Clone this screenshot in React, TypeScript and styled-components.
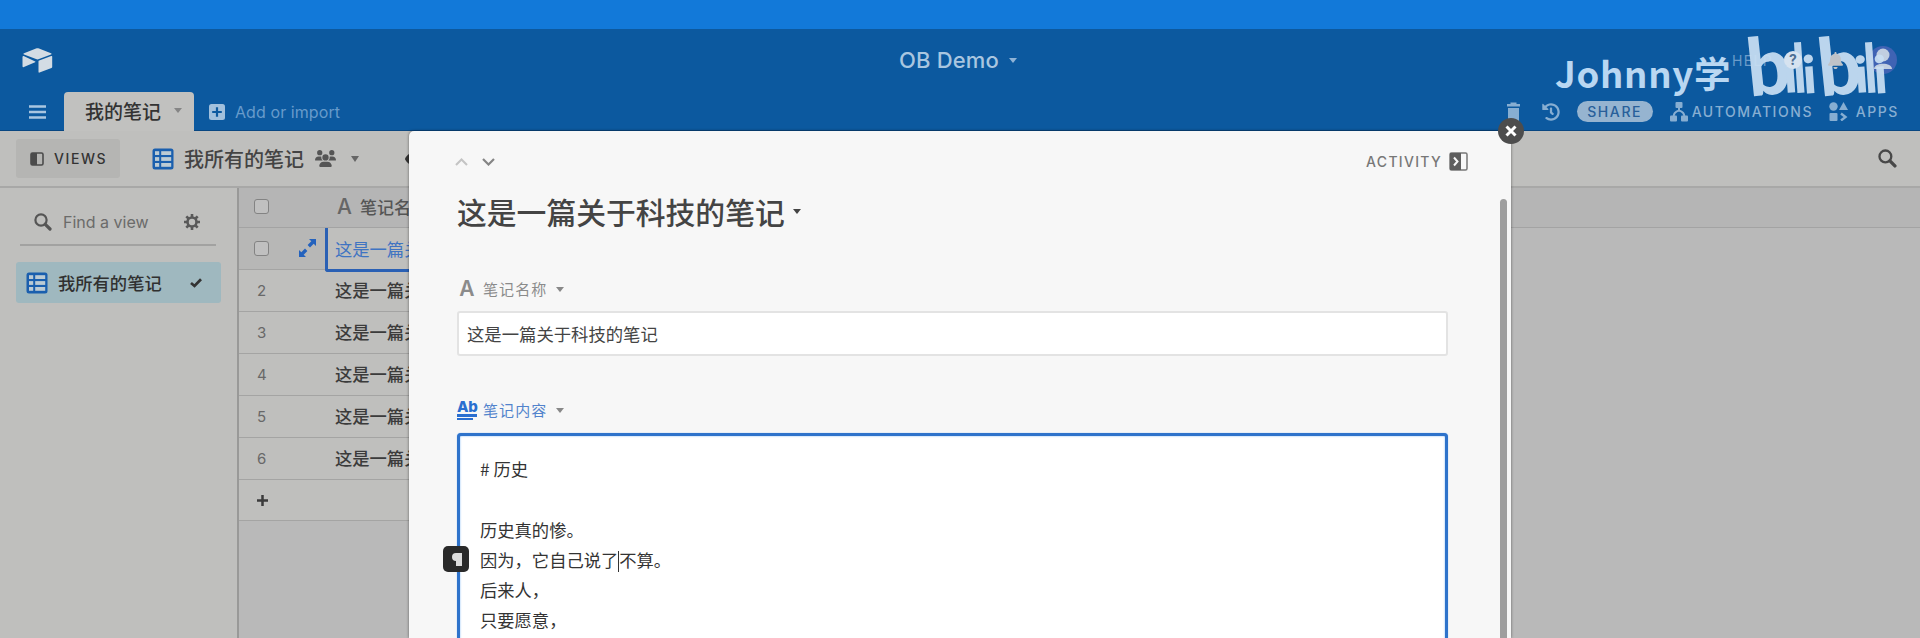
import React from 'react';
import styled, { createGlobalStyle } from 'styled-components';
import { FaEye, FaBell, FaHistory } from 'react-icons/fa';
import { FaUsers } from 'react-icons/fa6';

const sans = `Inter, "Noto Sans CJK SC", sans-serif`;

const GlobalStyle = createGlobalStyle`
  * { box-sizing: border-box; }
  body { margin: 0; font-family: ${sans}; color: #333; }
  svg { display: block; flex: none; }
`;

const Page = styled.div`
  position: relative;
  display: flex;
  flex-direction: column;
  width: 1920px;
  height: 638px;
  overflow: hidden;
  background: #bfbfbd;
`;

const TopStrip = styled.div`
  height: 29px;
  flex: none;
  background: #1279d9;
`;

const Header = styled.header`
  height: 102px;
  flex: none;
  display: flex;
  flex-direction: column;
  background: #0c599f;
  border-bottom: 1px solid #084681;
`;

const TitleRow = styled.div`
  height: 62px;
  display: grid;
  grid-template-columns: 1fr auto 1fr;
  align-items: center;
  padding: 0 23px 0 22px;
`;

const BaseName = styled.div`
  display: flex;
  align-items: center;
  gap: 10px;
  margin-right: 3px;
  font-size: 22px;
  font-weight: 500;
  letter-spacing: 0.2px;
  color: #a9c6e0;
`;

const HeaderTools = styled.div`
  display: flex;
  justify-content: flex-end;
  align-items: center;
  font-size: 14px;
  letter-spacing: 1.3px;
  color: #6b9cca;
`;

const HelpDot = styled.span`
  position: relative;
  z-index: 2;
  width: 18px;
  height: 18px;
  margin-left: 11px;
  border-radius: 50%;
  background: #d6e3f0;
  color: #4d6f94;
  font: 700 14px/18px ${sans};
  letter-spacing: 0;
  text-align: center;
`;

const Bell = styled(FaBell)`
  position: relative;
  z-index: 2;
  margin-left: 25px;
  color: #bfc3c8;
`;

const Avatar = styled.span`
  display: flex;
  align-items: center;
  justify-content: center;
  width: 28px;
  height: 28px;
  margin: 0 0 0 25px;
  border-radius: 50%;
  background: #3f63b4;
`;

const TabsRow = styled.div`
  height: 39px;
  display: flex;
  align-items: stretch;
  padding: 0 21px 0 29px;
`;

const Menu = styled.div`
  width: 35px;
  padding-top: 14px;
`;

const Tab = styled.div`
  width: 130px;
  height: 39px;
  display: flex;
  align-items: center;
  gap: 13px;
  padding: 0 0 2px 21px;
  margin-top: 1px;
  border-radius: 4px 4px 0 0;
  background: #c1c1bf;
  font: 500 19px/28px "Noto Sans CJK SC", sans-serif;
  color: #333;
`;

const AddTable = styled.div`
  display: flex;
  align-items: center;
  gap: 10px;
  margin-left: 15px;
  padding-top: 2px;
  font-size: 16px;
  letter-spacing: 0.08px;
  color: #679bcb;
`;

const TabActions = styled.div`
  display: flex;
  align-items: center;
  margin-left: auto;
  padding-top: 2px;
  color: #87aed2;
  font-size: 14px;
  font-weight: 500;
  letter-spacing: 1.6px;
`;

const Share = styled.span`
  width: 76px;
  height: 21px;
  margin: 0 17px 0 17px;
  border-radius: 11px;
  background: #96b4d0;
  color: #285f9a;
  line-height: 21px;
  text-align: center;
`;

const AppsLabel = styled.span`
  margin-left: 8px;
`;

const Automations = styled.span`
  width: 137px;
  margin-left: 4px;
  letter-spacing: 1.55px;
`;

const ViewBar = styled.div`
  height: 57px;
  flex: none;
  display: flex;
  align-items: center;
  padding: 0 23px 0 16px;
  border-bottom: 2px solid #a8a8a7;
`;

const ViewsButton = styled.div`
  display: flex;
  align-items: center;
  gap: 10px;
  width: 104px;
  height: 39px;
  padding-left: 14px;
  border-radius: 3px;
  background: #b5b5b3;
  font-size: 14px;
  font-weight: 500;
  letter-spacing: 1.6px;
`;

const ViewName = styled.div`
  display: flex;
  align-items: center;
  margin-left: 32px;
  color: #444;
  font: 500 20px/28px "Noto Sans CJK SC", sans-serif;
  & > span { margin: 0 11px 0 10px; }
`;

const Caret = styled.i<{ $size?: number; $color?: string }>`
  flex: none;
  width: 0;
  height: 0;
  border: solid transparent;
  border-width: ${p => (p.$size ?? 4) * 1.45}px ${p => p.$size ?? 4}px 0;
  border-top-color: ${p => p.$color ?? '#666'};
`;

const Spacer = styled.div`
  flex: 1;
`;

const Body = styled.div`
  flex: 1;
  display: flex;
  min-height: 0;
`;

const Sidebar = styled.aside`
  width: 239px;
  flex: none;
  padding: 12px 16px;
  border-right: 2px solid #999998;
`;

const FindRow = styled.div`
  display: flex;
  align-items: center;
  width: 196px;
  height: 46px;
  margin-left: 4px;
  padding: 0 16px 0 14px;
  border-bottom: 2px solid #a2a2a1;
  font-size: 16px;
  color: #6b6b6a;
  & > span { margin-left: 11px; flex: 1; }
`;

const ViewItem = styled.div`
  display: flex;
  align-items: center;
  width: 205px;
  height: 41px;
  margin-top: 16px;
  padding: 0 19px 0 10px;
  border-radius: 3px;
  background: #9fb8bf;
  color: #303030;
  font: 500 17.3px/24px "Noto Sans CJK SC", sans-serif;
  & > span { margin-left: 10px; flex: 1; }
`;

const Grid = styled.main`
  flex: 1;
  display: flex;
  flex-direction: column;
  background: #b9b9b9;
`;

const GridHead = styled.div`
  height: 40px;
  flex: none;
  display: flex;
  align-items: center;
  padding: 0 0 2px 15px;
  background: #b5b5b5;
  border-bottom: 1px solid #a3a3a3;
  color: #555;
  font: 500 17px/24px "Noto Sans CJK SC", sans-serif;
`;

const Rows = styled.div`
  width: 181px;
`;

const Row = styled.div<{ $active?: boolean; $last?: boolean }>`
  display: flex;
  align-items: stretch;
  height: ${p => (p.$last ? 41 : 42)}px;
  background: ${p => (p.$active ? '#b7b7b6' : '#bfbfbd')};
  border-bottom: 1px solid #a4a4a3;
`;

const RowNumber = styled.div`
  display: flex;
  align-items: center;
  width: 86px;
  flex: none;
  padding-left: 18px;
  font-size: 15px;
  color: #686868;
`;

const ActiveGutter = styled(RowNumber)`
  gap: 30px;
  padding: 0 0 1px 15px;
`;

const Cell = styled.div`
  flex: 1;
  padding-left: 10px;
  overflow: hidden;
  white-space: nowrap;
  font: 500 17.3px/40px "Noto Sans CJK SC", sans-serif;
  color: #3b3b3b;
`;

const ActiveCell = styled(Cell)`
  position: relative;
  z-index: 1;
  margin-bottom: -3px;
  padding-left: 7px;
  border-left: 3px solid #2a60b4;
  border-bottom: 3px solid #2a60b4;
  border-bottom-left-radius: 3px;
  background: #bfbfbd;
  font-weight: 400;
  line-height: 42px;
  color: #3f74c2;
`;

const Checkbox = styled.span`
  width: 15px;
  height: 15px;
  flex: none;
  border: 1.5px solid #838383;
  border-radius: 3px;
  background: #c0c0c0;
`;

const FieldA = styled.span<{ $color: string }>`
  font: 500 21px/24px Inter, sans-serif;
  color: ${p => p.$color};
`;

const HeadCheck = styled(Checkbox)`
  margin-right: 68px;
`;

const HeadName = styled.span`
  margin-left: 8px;
`;

const Modal = styled.section`
  position: absolute;
  z-index: 3;
  left: 409px;
  top: 131px;
  width: 1102px;
  height: 507px;
  padding: 0 63px 0 48px;
  border-radius: 5px 5px 0 0;
  background: #f7f7f7;
  box-shadow: 0 0 3px rgba(0, 0, 0, 0.5);
`;

const ModalBar = styled.div`
  display: flex;
  align-items: center;
  height: 61px;
  margin-right: -20px;
  gap: 14px;
`;

const Activity = styled.div`
  display: flex;
  align-items: center;
  gap: 7px;
  margin-left: auto;
  font-size: 14px;
  font-weight: 500;
  letter-spacing: 1.3px;
  color: #777;
`;

const RecordTitle = styled.h1`
  display: flex;
  align-items: center;
  gap: 8px;
  height: 42px;
  margin: -2px 0 42px;
  font: 500 29.8px/42px "Noto Sans CJK SC", sans-serif;
  color: #444;
`;

const Label = styled.div<{ $blue?: boolean }>`
  display: flex;
  align-items: center;
  height: 30px;
  font: 400 15px/22px "Noto Sans CJK SC", sans-serif;
  letter-spacing: 1.1px;
  color: ${p => (p.$blue ? '#5283cc' : '#8b8b8b')};
  & > span:nth-child(2) { margin: 0 9px 0 6px; }
`;

const LetterBox = styled.span`
  width: 20px;
  text-align: center;
  letter-spacing: 0;
  font: 600 21px/24px Inter, sans-serif;
`;

const AbIcon = styled.span`
  width: 20px;
  display: flex;
  flex-direction: column;
  gap: 1px;
  font: 800 15px/13px Inter, sans-serif;
  letter-spacing: -0.2px;
  color: #2a6fd0;
`;

const Bar = styled.i<{ $width: number }>`
  width: ${p => p.$width}px;
  height: 2.5px;
  background: #2a6fd0;
`;

const Input = styled.div`
  height: 45px;
  margin: 7px 0 39px;
  padding: 0 8px;
  border: 2px solid #e3e3e3;
  border-radius: 3px;
  background: #fff;
  font: 400 17.35px/42px "Noto Sans CJK SC", sans-serif;
  color: #444;
`;

const Editor = styled.div`
  position: relative;
  height: 240px;
  margin-top: 8px;
  padding: 18px 20px;
  border: 3px solid #2f73cb;
  border-radius: 4px;
  background: #fff;
  box-shadow: 0 0 1px #62a5ee, inset 0 0 2px #76b3f2;
  font: 400 17.3px/30.3px "Noto Sans CJK SC", sans-serif;
  color: #333;
`;

const Line = styled.div`
  height: 30.3px;
  white-space: pre;
`;

const Cursor = styled.i`
  display: inline-block;
  width: 1px;
  height: 21px;
  vertical-align: -5px;
  background: #333;
`;

const ParagraphBadge = styled.div`
  position: absolute;
  left: -17px;
  top: 110px;
  width: 26px;
  height: 26px;
  display: flex;
  align-items: center;
  justify-content: center;
  border-radius: 5px;
  background: #2a2a2a;
`;

const Close = styled.div`
  position: absolute;
  right: -13px;
  top: -13px;
  width: 26px;
  height: 26px;
  display: flex;
  align-items: center;
  justify-content: center;
  border-radius: 50%;
  background: #4d4d4d;
`;

const Scrollbar = styled.div`
  position: absolute;
  right: 4px;
  top: 68px;
  bottom: 0;
  width: 7px;
  border-radius: 4px 4px 0 0;
  background: #9e9e9e;
`;

const Watermark = styled.div`
  position: absolute;
  z-index: 1;
  left: 1555px;
  top: 30px;
  display: flex;
`;

const WatermarkName = styled.span`
  width: 189px;
  padding-top: 15px;
  font: 700 36.5px/56px "Noto Sans CJK SC", sans-serif;
  letter-spacing: 0.7px;
  color: #b9d7f2;
  white-space: nowrap;
`;

const SearchIcon = ({ color = '#555', size = 18 }: { color?: string; size?: number }) => (
  <svg width={size} height={size} viewBox="0 0 18 18" fill="none" stroke={color}>
    <circle cx="7" cy="7" r="5.6" strokeWidth="2.2" />
    <path d="M11.3 11.3 16 16" strokeWidth="3.2" strokeLinecap="round" />
  </svg>
);

const GridIcon = () => (
  <svg width="22" height="22" viewBox="0 0 22 22">
    <rect x="0.5" y="0.5" width="21" height="21" rx="2.5" fill="#1a5fae" />
    <g fill="#bccbd4">
      <rect x="3" y="3.2" width="4.2" height="3.8" /><rect x="9.2" y="3.2" width="10" height="3.8" />
      <rect x="3" y="9.1" width="4.2" height="3.8" /><rect x="9.2" y="9.1" width="10" height="3.8" />
      <rect x="3" y="15" width="4.2" height="3.8" /><rect x="9.2" y="15" width="10" height="3.8" />
    </g>
  </svg>
);

const GearIcon = () => (
  <svg width="16" height="16" viewBox="0 0 16 16" fill="none" stroke="#595959">
    <circle cx="8" cy="8" r="4.5" strokeWidth="2.6" />
    <path d="M8 0v3M8 13v3M0 8h3M13 8h3M2.3 2.3l2.2 2.2M11.5 11.5l2.2 2.2M2.3 13.7l2.2-2.2M11.5 4.5l2.2-2.2" strokeWidth="2.6" />
  </svg>
);

const BrandMark = () => (
  <svg width="31" height="25" viewBox="0 0 31 25" fill="#d3dce4">
    <path d="M14 .6 2 5.2c-.7.3-.7 1 0 1.3l12 4.6c1 .4 2 .4 3 0l12-4.6c.7-.3.7-1 0-1.3L17 .6c-1-.4-2-.4-3 0Z" />
    <path d="M16.5 13.2v10.7c0 .7.5.9 1 .7l12-4.7c.5-.2.7-.5.7-1V8.6c0-.6-.4-.8-1-.6l-12 4.4c-.5.2-.7.4-.7.8Z" />
    <path d="m13.2 13.4-11-5.2C1.3 7.8.5 8.1.5 8.9v9.4c0 .9.7 1.2 1.4.8l11.2-4.9c.5-.2.5-.6.1-.8Z" />
  </svg>
);

const BrandHalf = ({ x }: { x: number }) => (
  <g transform={`translate(${x} 0)`}>
    <g transform="rotate(-6 20 40)">
      <text x="3" y="65" fontSize="80" textLength="43" lengthAdjust="spacingAndGlyphs">b</text>
    </g>
    <g transform="rotate(-4 55 40)">
      <text x="39" y="62" fontSize="50" textLength="14" lengthAdjust="spacingAndGlyphs">i</text>
      <text x="49" y="63" fontSize="68" textLength="13" lengthAdjust="spacingAndGlyphs">l</text>
      <text x="58" y="64" fontSize="52" textLength="14" lengthAdjust="spacingAndGlyphs">i</text>
    </g>
  </g>
);

const records = [2, 3, 4, 5, 6];
const title = '这是一篇关于科技的笔记';

export default function App() {
  return (
    <Page>
      <GlobalStyle />
      <TopStrip />
      <Header>
        <TitleRow>
          <BrandMark />
          <BaseName>OB Demo<Caret $size={4} $color="#8fb3d6" /></BaseName>
          <HeaderTools>
            HELP
            <HelpDot>?</HelpDot>
            <Bell size={17} />
            <Avatar>
              <svg width="18" height="24" viewBox="0 0 18 24" fill="#c1cee0">
                <circle cx="9" cy="7" r="6.5" /><path d="M0 21c0-7 18-7 18 0Z" />
              </svg>
            </Avatar>
          </HeaderTools>
        </TitleRow>
        <TabsRow>
          <Menu>
            <svg width="17" height="14" viewBox="0 0 17 14" stroke="#a9c6e1" strokeWidth="2.4"><path d="M0 1.5h17M0 7h17M0 12.5h17" /></svg>
          </Menu>
          <Tab>我的笔记<Caret $size={4} $color="#858585" /></Tab>
          <AddTable>
            <svg width="16" height="16" viewBox="0 0 16 16"><rect width="16" height="16" rx="2.5" fill="#a1c0dd" /><path d="M8 3.2v9.6M3.2 8h9.6" stroke="#0c599f" strokeWidth="2.2" /></svg>
            Add or import
          </AddTable>
          <TabActions>
            <svg width="13" height="19" viewBox="0 0 13 19" fill="#87aed2"><path d="M0 2h3.5V.5h6V2H13v2.5H0ZM1 6h11v13H1Z" /></svg>
            <FaHistory size={18} style={{ marginLeft: 22 }} />
            <Share>SHARE</Share>
            <svg width="18" height="20" viewBox="0 0 18 20" fill="#87aed2">
              <rect x="5.5" width="7" height="6" rx="1" /><rect y="13.5" width="7" height="6" rx="1" /><rect x="11" y="13.5" width="7" height="6" rx="1" />
              <path d="M9 5v4M3.5 15c0-3 2-5.5 5.5-6.5 3.5 1 5.5 3.5 5.5 6.5" fill="none" stroke="#87aed2" strokeWidth="2" />
            </svg>
            <Automations>AUTOMATIONS</Automations>
            <svg width="19" height="19" viewBox="0 0 19 19" fill="#87aed2">
              <circle cx="4.5" cy="4.5" r="4.2" /><path d="M14.5 0 19 8h-9Z" /><rect x=".5" y="11" width="8" height="8" rx="1" />
              <path d="m12 11.5 4.5 3.5-4.5 3.5" fill="none" stroke="#87aed2" strokeWidth="2.4" />
            </svg>
            <AppsLabel>APPS</AppsLabel>
          </TabActions>
        </TabsRow>
      </Header>

      <ViewBar>
        <ViewsButton>
          <svg width="14" height="14" viewBox="0 0 14 14"><rect x="1" y="1" width="12" height="12" rx="1.5" fill="none" stroke="#4b4b4b" strokeWidth="1.6" /><rect x="1" y="1" width="6" height="12" fill="#4b4b4b" /></svg>
          VIEWS
        </ViewsButton>
        <ViewName>
          <GridIcon />
          <span>我所有的笔记</span>
          <FaUsers size={21} color="#555" />
        </ViewName>
        <Caret $size={4.5} style={{ marginLeft: 15 }} />
        <FaEye size={20} color="#333" style={{ marginLeft: 46 }} />
        <Spacer />
        <SearchIcon color="#484848" size={19} />
      </ViewBar>

      <Body>
        <Sidebar>
          <FindRow><SearchIcon /><span>Find a view</span><GearIcon /></FindRow>
          <ViewItem>
            <GridIcon /><span>我所有的笔记</span>
            <svg width="12" height="10" viewBox="0 0 12 10" fill="none" stroke="#333" strokeWidth="2.7"><path d="m1 5 3.5 3L11 1.2" /></svg>
          </ViewItem>
        </Sidebar>
        <Grid>
          <GridHead>
            <HeadCheck />
            <FieldA $color="#666">A</FieldA>
            <HeadName>笔记名称</HeadName>
          </GridHead>
          <Rows>
            <Row $active>
              <ActiveGutter>
                <Checkbox />
                <svg width="17" height="18" viewBox="0 0 17 18" fill="#2462bd"><path d="M10 0h7v7l-2.3-2.3-3.7 3.8-2.4-2.4 3.7-3.8ZM0 18v-7l2.3 2.3L6 9.5l2.4 2.4-3.7 3.8L7 18Z" /></svg>
              </ActiveGutter>
              <ActiveCell>{title}</ActiveCell>
            </Row>
            {records.map(n => (
              <Row key={n}><RowNumber>{n}</RowNumber><Cell>{title}</Cell></Row>
            ))}
            <Row $last>
              <RowNumber><svg width="11" height="11" viewBox="0 0 11 11" stroke="#3b3b3b" strokeWidth="2.5"><path d="M5.5 0v11M0 5.5h11" /></svg></RowNumber>
            </Row>
          </Rows>
        </Grid>
      </Body>

      <Watermark>
        <WatermarkName>Johnny学</WatermarkName>
        <svg width="150" height="72" viewBox="0 0 150 72" fill="#c9dff3" fontFamily="Lato, sans-serif" fontWeight="900" opacity="0.93">
          <BrandHalf x={0} />
          <BrandHalf x={71} />
        </svg>
      </Watermark>

      <Modal>
        <ModalBar>
          <svg width="13" height="8" viewBox="0 0 13 8" fill="none" stroke="#c4c4c4" strokeWidth="2" style={{ marginLeft: -2 }}><path d="m1 7 5.5-5.5L12 7" /></svg>
          <svg width="13" height="8" viewBox="0 0 13 8" fill="none" stroke="#858585" strokeWidth="2.2"><path d="m1 1 5.5 5.5L12 1" /></svg>
          <Activity>
            ACTIVITY
            <svg width="19" height="19" viewBox="0 0 19 19"><rect x="1" y="1" width="17" height="17" rx="1.5" fill="#f7f7f7" stroke="#777" strokeWidth="1.5" /><path d="M1 1h11v17H1Z" fill="#5e5e5e" /><path d="m5 5.5 3.5 4L5 13.5" fill="none" stroke="#f7f7f7" strokeWidth="2" /></svg>
          </Activity>
        </ModalBar>
        <RecordTitle>{title}<Caret $size={4} $color="#444" /></RecordTitle>
        <Label><LetterBox>A</LetterBox><span>笔记名称</span><Caret $size={4} $color="#888" /></Label>
        <Input>{title}</Input>
        <Label $blue><AbIcon>Ab<Bar $width={20} /><Bar $width={16} /></AbIcon><span>笔记内容</span><Caret $size={4} $color="#888" /></Label>
        <Editor>
          <Line># 历史</Line>
          <Line />
          <Line>历史真的惨。</Line>
          <Line>因为，它自己说了<Cursor />不算。</Line>
          <Line>后来人，</Line>
          <Line>只要愿意，</Line>
          <ParagraphBadge>
            <svg width="11" height="13" viewBox="0 0 11 13" fill="#ddd"><path d="M5 0h6v13H5V8a4 4 0 0 1 0-8Z" /></svg>
          </ParagraphBadge>
        </Editor>
        <Scrollbar />
        <Close><svg width="12" height="12" viewBox="0 0 12 12" stroke="#fff" strokeWidth="3"><path d="m1.5 1.5 9 9M10.5 1.5l-9 9" /></svg></Close>
      </Modal>
    </Page>
  );
}
